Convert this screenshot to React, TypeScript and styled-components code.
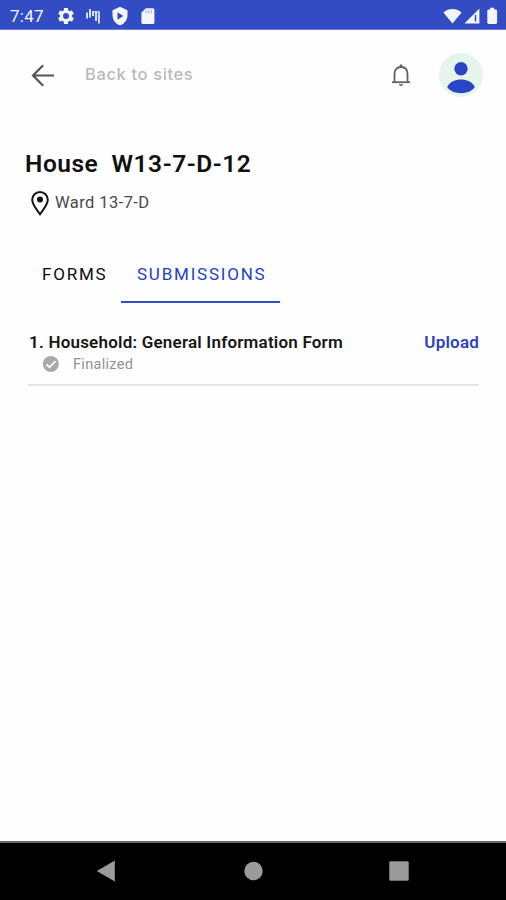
import React from "react";
import styled, { createGlobalStyle } from "styled-components";

const GlobalStyle = createGlobalStyle`
  * { box-sizing: border-box; }
  body { margin: 0; background: #fff; font-family: Roboto, sans-serif; }
  svg { display: block; flex: none; }
  button { border: 0; padding: 0; background: none; font-family: inherit; }
`;

const Screen = styled.div`
  width: 506px;
  height: 900px;
  display: flex;
  flex-direction: column;
  background: #fefefe;
  overflow: hidden;
  white-space: nowrap;
`;

const StatusBar = styled.header`
  height: 30px;
  flex: none;
  display: flex;
  align-items: center;
  justify-content: space-between;
  padding: 2px 7px 0 10px;
  background: #324cc4;
  border-bottom: 1px solid #6f80d6;
  color: #f3f5ff;
`;

const StatusGroup = styled.div<{ $gap: number }>`
  display: flex;
  align-items: center;
  gap: ${(p) => p.$gap}px;
`;

const Clock = styled.span`
  width: 37px;
  margin-right: 9px;
  font-size: 17px;
  line-height: 20px;
  letter-spacing: 0.25px;
`;

const AppBar = styled.div`
  height: 90px;
  flex: none;
  display: flex;
  align-items: center;
  padding: 0 23px 0 31px;
`;

const BackLabel = styled.span`
  margin-left: 30px;
  padding-bottom: 2px;
  flex: 1;
  font-family: Inter, sans-serif;
  font-size: 16.5px;
  font-weight: 500;
  line-height: 20px;
  letter-spacing: 0.62px;
  color: #bababa;
`;

const Avatar = styled.div`
  width: 44px;
  height: 44px;
  margin-left: 27px;
  border-radius: 50%;
  background: #e6f5ea;
`;

const SiteHeader = styled.section`
  height: 128px;
  flex: none;
  padding: 28px 25px 0;
`;

const Title = styled.h1`
  margin: 0;
  font-size: 24.5px;
  font-weight: 600;
  line-height: 32px;
  letter-spacing: 0.53px;
  color: #111;
  white-space: pre;
`;

const Location = styled.div`
  display: flex;
  align-items: center;
  gap: 5px;
  margin: 10px 0 0 5px;
  font-size: 16.5px;
  line-height: 24px;
  letter-spacing: 0.42px;
  color: #484848;
`;

const Tabs = styled.nav`
  height: 55px;
  flex: none;
  display: flex;
  padding-left: 26px;
`;

const Tab = styled.button<{ $active?: boolean; $width: number }>`
  width: ${(p) => p.$width}px;
  text-align: left;
  padding: 0 0 2px 16px;
  font-size: 17px;
  font-weight: 400;
  letter-spacing: 1.78px;
  color: ${(p) => (p.$active ? "#2440c4" : "#0c0c0c")};
  border-bottom: 2px solid ${(p) => (p.$active ? "#324cc4" : "transparent")};
`;

const Content = styled.main`
  flex: 1;
  padding: 28px 27px 0 28px;
`;

const FormRow = styled.article`
  height: 55px;
  border-bottom: 2px solid #e4e4e4;
`;

const FormHeading = styled.div`
  display: flex;
  justify-content: space-between;
  padding-left: 1px;
  font-size: 17px;
  line-height: 22px;
`;

const FormName = styled.span`
  font-weight: 600;
  letter-spacing: 0.21px;
  color: #161616;
`;

const Upload = styled.button`
  font-size: 17px;
  font-weight: 600;
  line-height: 22px;
  letter-spacing: 0.2px;
  color: #2c42c4;
`;

const FormStatus = styled.div`
  display: flex;
  align-items: center;
  gap: 13px;
  margin-top: 1px;
  padding-left: 14px;
  font-size: 14.5px;
  line-height: 21px;
  letter-spacing: 0.3px;
  color: #929292;
`;

const NavBar = styled.footer`
  height: 59px;
  flex: none;
  display: flex;
  align-items: center;
  justify-content: space-between;
  padding: 0 97px 2px 96px;
  background: #000;
  border-top: 2px solid #686868;
`;

export default function App() {
  return (
    <>
      <GlobalStyle />
      <Screen>
        <StatusBar>
          <StatusGroup $gap={0}>
            <Clock>7:47</Clock>
            <svg width="20" height="20" viewBox="0 0 24 24" fill="currentColor">
              <path d="M19.14 12.94c.04-.3.06-.61.06-.94 0-.32-.02-.64-.07-.94l2.03-1.58a.49.49 0 0 0 .12-.61l-1.92-3.32a.49.49 0 0 0-.59-.22l-2.39.96c-.5-.38-1.03-.7-1.62-.94l-.36-2.54a.48.48 0 0 0-.48-.41h-3.84c-.24 0-.43.17-.47.41l-.36 2.54c-.59.24-1.13.57-1.62.94l-2.39-.96a.48.48 0 0 0-.59.22L2.74 8.87c-.12.21-.08.47.12.61l2.03 1.58c-.05.3-.09.63-.09.94s.02.64.07.94l-2.03 1.58a.49.49 0 0 0-.12.61l1.92 3.32c.12.22.37.29.59.22l2.39-.96c.5.38 1.03.7 1.62.94l.36 2.54c.05.24.24.41.48.41h3.84c.24 0 .44-.17.47-.41l.36-2.54c.59-.24 1.13-.56 1.62-.94l2.39.96c.22.08.47 0 .59-.22l1.92-3.32a.48.48 0 0 0-.12-.61l-2.01-1.58zM12 15.6A3.6 3.6 0 1 1 12 8.4a3.6 3.6 0 0 1 0 7.2z" />
            </svg>
            <svg width="34" height="20" viewBox="0 0 34 20" fill="none" stroke="#d3dbff" strokeWidth="2">
              <path d="M11 6.500v6M14 3v8.500M17 5v5M20 5V15M22.900 5.500v12" />
              <path d="M17 5.700h6" strokeWidth="1.200" />
            </svg>
            <svg width="20" height="20" viewBox="0 0 24 24" fill="currentColor">
              <path fillRule="evenodd" d="M12 1 3 5v6c0 5.55 3.84 10.74 9 12 5.16-1.26 9-6.45 9-12V5zM9 7.4v9l7-4.5z" />
            </svg>
            <svg width="34" height="20" viewBox="0 0 34 20">
              <path d="M15.8 2.2h7a1.6 1.6 0 0 1 1.6 1.6v12.7a1.4 1.4 0 0 1-1.4 1.4H12.8a1.4 1.4 0 0 1-1.4-1.4V6.8z" fill="currentColor" />
              <path d="M15.9 4.2v3M18.6 4.2v3M21.3 4.2v3" stroke="#a3aeea" strokeWidth="1.2" />
            </svg>
          </StatusGroup>
          <StatusGroup $gap={1}>
            <svg width="19" height="18" viewBox="0 0 19 18">
              <path d="M.4 5.4C5.7.9 13.3.9 18.6 5.4L9.5 16.5z" fill="currentColor" />
            </svg>
            <svg width="18" height="18" viewBox="0 0 18 18">
              <path d="M1.5 16.5 16.4 1.6v14.9z" fill="currentColor" />
              <path d="M12.500 8v6.500" stroke="#324cc4" strokeWidth="1.5" />
            </svg>
            <svg width="17" height="20" viewBox="0 0 17 20">
              <path d="M8.2 1.8h4v1.8h1.4c.9 0 1.5.6 1.5 1.4v11.6c0 .8-.6 1.4-1.5 1.4H6.8c-.9 0-1.5-.6-1.5-1.4V5c0-.8.6-1.4 1.5-1.4h1.4z" fill="currentColor" />
            </svg>
          </StatusGroup>
        </StatusBar>

        <AppBar>
          <svg width="24" height="24" viewBox="0 0 24 24" fill="none" stroke="#555" strokeWidth="2.2">
            <path d="M23 12.5H2.5M12.2 2.2 2 12.5l10.2 10.3" />
          </svg>
          <BackLabel>Back to sites</BackLabel>
          <svg width="22" height="26" viewBox="0 0 22 26" fill="none" stroke="#626262" strokeWidth="1.8">
            <path d="M2 20.2h18" />
            <path d="M4.5 20V12c0-4.3 2.5-7 6.5-7s6.5 2.7 6.5 7v8" />
            <path d="M11 2.5V5" strokeWidth="2.5" />
            <path d="M9 22.5h4l-2 1.4z" fill="#626262" strokeWidth=".6" />
          </svg>
          <Avatar>
            <svg width="44" height="44" viewBox="0 0 44 44" fill="#2945c7">
              <circle cx="22" cy="15.8" r="6.7" />
              <path d="M8.2 34c2.8-5.1 8-7.4 13.8-7.4S33 28.9 35.8 34c-2.8 4.1-8 6.200-13.800 6.200S11 38.100 8.200 34z" />
            </svg>
          </Avatar>
        </AppBar>

        <SiteHeader>
          <Title>{"House  W13-7-D-12"}</Title>
          <Location>
            <svg width="20" height="26" viewBox="0 0 20 26">
              <path d="M10 24.2C7.5 20.5 2.2 14.9 2.2 9.8a7.8 7.8 0 0 1 15.6 0c0 5.1-5.3 10.7-7.8 14.4z" fill="none" stroke="#151515" strokeWidth="2" />
              <circle cx="10" cy="9.6" r="3" fill="#111" />
            </svg>
            Ward 13-7-D
          </Location>
        </SiteHeader>

        <Tabs>
          <Tab $width={95}>FORMS</Tab>
          <Tab $active $width={159}>SUBMISSIONS</Tab>
        </Tabs>

        <Content>
          <FormRow>
            <FormHeading>
              <FormName>1. Household: General Information Form</FormName>
              <Upload>Upload</Upload>
            </FormHeading>
            <FormStatus>
              <svg width="18" height="18" viewBox="0 0 18 18">
                <circle cx="8.8" cy="8" r="8" fill="#a9a9a9" />
                <path d="m4.5 8.3 3 3 6-6.300" fill="none" stroke="#fff" strokeWidth="1.8" />
              </svg>
              Finalized
            </FormStatus>
          </FormRow>
        </Content>

        <NavBar>
          <svg width="20" height="22" viewBox="0 0 20 22">
            <path d="M.8 11 18.8.5v21z" fill="#9b9b9b" />
          </svg>
          <svg width="20" height="20" viewBox="0 0 20 20">
            <circle cx="10.5" cy="10" r="9.2" fill="#9b9b9b" />
          </svg>
          <svg width="20" height="20" viewBox="0 0 20 20">
            <rect x=".5" y=".5" width="19" height="19" rx="1" fill="#9b9b9b" stroke="#777" strokeWidth=".8" />
          </svg>
        </NavBar>
      </Screen>
    </>
  );
}
